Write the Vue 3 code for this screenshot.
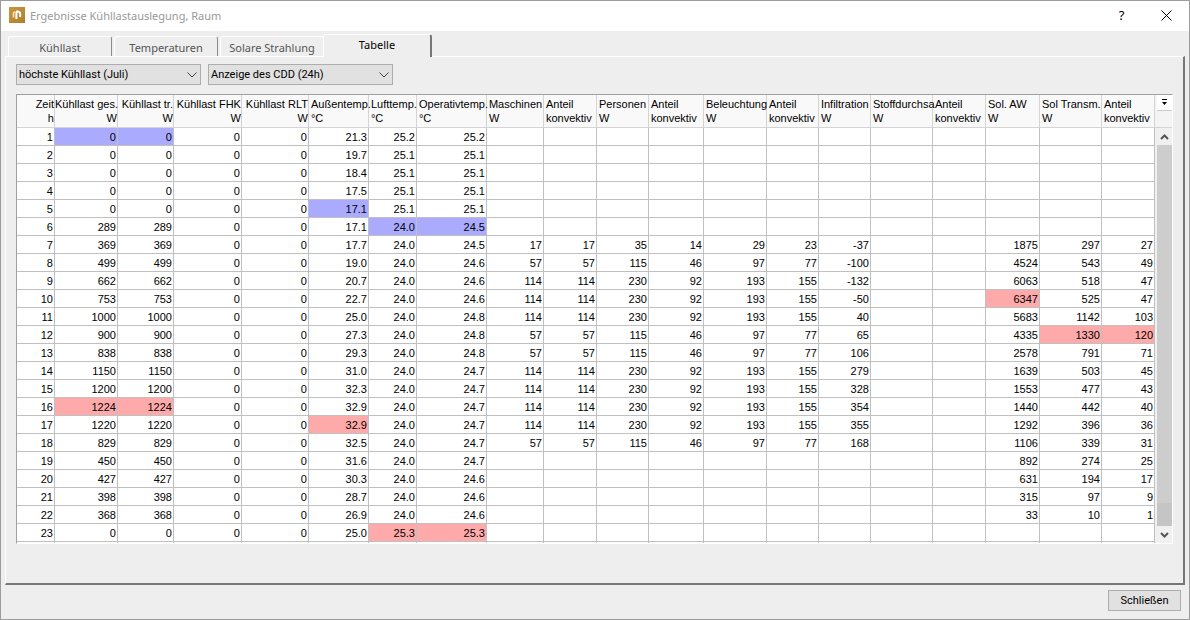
<script setup>
import { ref } from 'vue'

const tabs = ['Kühllast', 'Temperaturen', 'Solare Strahlung', 'Tabelle']
const activeTab = ref('Tabelle')
const period = ref('höchste Kühllast (Juli)')
const display = ref('Anzeige des CDD (24h)')

const columns = [
  { title: 'Zeit', unit: 'h', width: 38, right: true },
  { title: 'Kühllast ges.', unit: 'W', width: 63, right: true },
  { title: 'Kühllast tr.', unit: 'W', width: 56, right: true },
  { title: 'Kühllast FHK', unit: 'W', width: 68, right: true },
  { title: 'Kühllast RLT', unit: 'W', width: 67, right: true },
  { title: 'Außentemp.', unit: '°C', width: 60 },
  { title: 'Lufttemp.', unit: '°C', width: 48 },
  { title: 'Operativtemp.', unit: '°C', width: 70 },
  { title: 'Maschinen', unit: 'W', width: 57 },
  { title: 'Anteil', unit: 'konvektiv', width: 53 },
  { title: 'Personen', unit: 'W', width: 52 },
  { title: 'Anteil', unit: 'konvektiv', width: 55 },
  { title: 'Beleuchtung', unit: 'W', width: 63 },
  { title: 'Anteil', unit: 'konvektiv', width: 52 },
  { title: 'Infiltration', unit: 'W', width: 52 },
  { title: 'Stoffdurchsa', unit: 'W', width: 62 },
  { title: 'Anteil', unit: 'konvektiv', width: 53 },
  { title: 'Sol. AW', unit: 'W', width: 54 },
  { title: 'Sol Transm.', unit: 'W', width: 62 },
  { title: 'Anteil', unit: 'konvektiv', width: 53 },
]
const totalWidth = columns.reduce((sum, c) => sum + c.width, 0)
const share = (c) => ({ width: (c.width / totalWidth) * 100 + '%' })

const full = [114, 114, 230, 92, 193, 155]
const half = [57, 57, 115, 46, 97, 77]
const none = ['', '', '', '', '', '']

// load, temperatures, internal gains, infiltration, solar gains
const hours = [
  [0, '21.3', '25.2', '25.2', none, '', ['', '', '']],
  [0, '19.7', '25.1', '25.1', none, '', ['', '', '']],
  [0, '18.4', '25.1', '25.1', none, '', ['', '', '']],
  [0, '17.5', '25.1', '25.1', none, '', ['', '', '']],
  [0, '17.1', '25.1', '25.1', none, '', ['', '', '']],
  [289, '17.1', '24.0', '24.5', none, '', ['', '', '']],
  [369, '17.7', '24.0', '24.5', [17, 17, 35, 14, 29, 23], -37, [1875, 297, 27]],
  [499, '19.0', '24.0', '24.6', half, -100, [4524, 543, 49]],
  [662, '20.7', '24.0', '24.6', full, -132, [6063, 518, 47]],
  [753, '22.7', '24.0', '24.6', full, -50, [6347, 525, 47]],
  [1000, '25.0', '24.0', '24.8', full, 40, [5683, 1142, 103]],
  [900, '27.3', '24.0', '24.8', half, 65, [4335, 1330, 120]],
  [838, '29.3', '24.0', '24.8', half, 106, [2578, 791, 71]],
  [1150, '31.0', '24.0', '24.7', full, 279, [1639, 503, 45]],
  [1200, '32.3', '24.0', '24.7', full, 328, [1553, 477, 43]],
  [1224, '32.9', '24.0', '24.7', full, 354, [1440, 442, 40]],
  [1220, '32.9', '24.0', '24.7', full, 355, [1292, 396, 36]],
  [829, '32.5', '24.0', '24.7', half, 168, [1106, 339, 31]],
  [450, '31.6', '24.0', '24.7', none, '', [892, 274, 25]],
  [427, '30.3', '24.0', '24.6', none, '', [631, 194, 17]],
  [398, '28.7', '24.0', '24.6', none, '', [315, 97, 9]],
  [368, '26.9', '24.0', '24.6', none, '', [33, 10, 1]],
  [0, '25.0', '25.3', '25.3', none, '', ['', '', '']],
]
const rows = hours.map(([load, outside, air, operative, gains, infiltration, solar], i) => [
  i + 1, load, load, 0, 0, outside, air, operative, ...gains, infiltration, '', '', ...solar,
])

// hour -> marked column indexes
const minima = { 1: [1, 2], 5: [5], 6: [6, 7] }
const maxima = { 10: [17], 12: [18, 19], 16: [1, 2], 17: [5], 23: [6, 7] }
const mark = (hour, col) => ({
  min: minima[hour]?.includes(col),
  max: maxima[hour]?.includes(col),
})
</script>

<template>
  <main class="window">
    <header class="titlebar">
      <svg class="logo" width="16" height="16" viewBox="0 0 16 16" aria-hidden="true">
        <defs>
          <linearGradient id="gold" x1="0" y1="0" x2="1" y2="1">
            <stop offset="0" stop-color="#c9973f" />
            <stop offset="1" stop-color="#b07f2b" />
          </linearGradient>
        </defs>
        <rect width="16" height="16" fill="url(#gold)" />
        <path d="M4.5 10.5V6.4Q4.5 5.2 5.8 4.8" fill="none" stroke="#f3e6cc" stroke-width="1.6" />
        <path d="M7.4 12V5.2Q7.4 4.2 8.8 4.4Q11.2 4.8 11.2 7V10" fill="none" stroke="#fff" stroke-width="2" />
      </svg>
      <h1>Ergebnisse Kühllastauslegung, Raum</h1>
      <button class="caption help" type="button" aria-label="Hilfe">?</button>
      <button class="caption" type="button" aria-label="Fenster schließen">
        <svg width="11" height="11" viewBox="0 0 11 11"><path d="M.5 .5L10.5 10.5M10.5 .5L.5 10.5" stroke="#000" fill="none" /></svg>
      </button>
    </header>

    <nav class="tabs" role="tablist">
      <button
        v-for="tab in tabs" :key="tab" type="button" role="tab" class="tab"
        :class="{ active: tab === activeTab }" :aria-selected="tab === activeTab" @click="activeTab = tab"
      >{{ tab }}</button>
    </nav>

    <section class="panel">
      <div class="filters">
        <div class="combo">
          <select v-model="period" aria-label="Zeitraum"><option>höchste Kühllast (Juli)</option></select>
          <svg width="10" height="6" viewBox="0 0 10 6"><path d="M.5 .5L5 5L9.5 .5" /></svg>
        </div>
        <div class="combo">
          <select v-model="display" aria-label="Anzeige"><option>Anzeige des CDD (24h)</option></select>
          <svg width="10" height="6" viewBox="0 0 10 6"><path d="M.5 .5L5 5L9.5 .5" /></svg>
        </div>
      </div>

      <div class="grid">
        <div class="viewport">
          <table>
            <colgroup><col v-for="(c, i) in columns" :key="i" :style="share(c)" /></colgroup>
            <thead>
              <tr>
                <th v-for="(c, i) in columns" :key="i" scope="col" :class="{ right: c.right }">{{ c.title }}<br />{{ c.unit }}</th>
              </tr>
            </thead>
            <tbody>
              <tr v-for="row in rows" :key="row[0]">
                <td v-for="(value, i) in row" :key="i" :class="mark(row[0], i)">{{ value }}</td>
              </tr>
              <tr><td v-for="(c, i) in columns" :key="i"></td></tr>
            </tbody>
          </table>
        </div>
        <div class="gutter">
          <div class="corner">
            <button type="button" aria-label="Spalten wählen">
              <svg width="7" height="7" viewBox="0 0 7 7"><path d="M1 0H6V1H1ZM1 3H6L3.5 6Z" fill="#000" /></svg>
            </button>
          </div>
          <div class="scrollbar">
            <button type="button" aria-label="Nach oben">
              <svg width="9" height="6" viewBox="0 0 9 6"><path d="M1 5L4.5 1.5L8 5" /></svg>
            </button>
            <div class="thumb"></div>
            <div class="rest"></div>
            <button type="button" aria-label="Nach unten">
              <svg width="9" height="6" viewBox="0 0 9 6"><path d="M1 1L4.5 4.5L8 1" /></svg>
            </button>
          </div>
        </div>
      </div>
    </section>

    <footer class="footer"><button type="button" class="close">Schließen</button></footer>
  </main>
</template>

<style>
body { background: #eee; }
</style>

<style scoped>
.window {
  box-sizing: border-box;
  display: flex;
  flex-direction: column;
  height: 100vh;
  border: 1px solid #9c9c9c;
  background: #eee;
  color: #000;
  font: 11px Roboto, "Liberation Sans", sans-serif;
}
button { padding: 0; border: 0; background: none; color: inherit; font: inherit; }
.titlebar { box-sizing: border-box; display: flex; align-items: center; flex: none; height: 30px; padding-bottom: 2px; background: #fff; }
.logo { margin-left: 8px; }
h1 { flex: 1; margin: 0 0 0 5px; color: #999; font: 11px "Noto Sans", sans-serif; }
.caption { display: grid; place-items: center; width: 45px; height: 28px; }
.help { font: 13px "Noto Sans", sans-serif; }

.tabs { display: flex; align-items: flex-end; gap: 2px; flex: none; height: 25px; padding-left: 7px; }
.tab {
  width: 104px;
  height: 20px;
  padding-top: 2px;
  border: 1px solid #fff;
  border-right-color: #8c8c8c;
  border-bottom: 0;
  border-radius: 3px 3px 0 0;
  color: #555;
  font: 11px "Noto Sans", sans-serif;
}
.tab:nth-child(3) { border-right-color: #fff; }
.tab.active {
  position: relative;
  width: 109px;
  height: 23px;
  margin: 0 0 -1px -3px;
  padding: 0 0 3px;
  border-right: 2px solid #777;
  background: #eee;
  color: #000;
}

.panel {
  display: flex;
  flex: 1;
  flex-direction: column;
  gap: 9px;
  min-height: 0;
  margin: 0 4px;
  padding: 7px 10px 39px;
  border: solid;
  border-width: 1px 2px 2px 1px;
  border-color: #fff #777 #777 #fff;
}
.filters { display: flex; gap: 7px; flex: none; }
.combo { position: relative; width: 185px; }
.combo select {
  display: block;
  appearance: none;
  width: 100%;
  height: 21px;
  padding: 0 20px 0 2px;
  border: 1px solid #adadad;
  border-radius: 0;
  background: #e1e1e1;
  color: #000;
  font: inherit;
}
.combo svg { position: absolute; top: 8px; right: 4px; fill: none; stroke: #444; pointer-events: none; }

.grid {
  display: flex;
  flex: 1;
  min-height: 0;
  border: solid;
  border-width: 1px;
  border-color: #a0a0a0 #fff #fff #a0a0a0;
  background: #fff;
}
.viewport { flex: 1; min-width: 0; overflow: hidden; }
table {
  width: 100%;
  table-layout: fixed;
  border-collapse: separate;
  border-spacing: 0;
  font: 11px "Liberation Sans", Arial, sans-serif;
}
th, td { border: solid #c0c0c0; border-width: 0 1px 1px 0; white-space: nowrap; }
th { padding: 2px 0 2px 2px; border-color: #d4d4d4; background: #f9f9f9; font-weight: normal; line-height: 14px; text-align: left; }
th.right { padding-left: 0; text-align: right; }
td { height: 16px; padding: 1px 1px 0 0; line-height: 16px; text-align: right; }
.min { background: #aaf; }
.max { background: #faa; }

.gutter { display: flex; flex: none; flex-direction: column; width: 17px; }
.corner { box-sizing: border-box; height: 33px; padding-left: 2px; border-bottom: 1px solid #d4d4d4; background: #f4f4f4; }
.corner button { display: grid; place-items: center; width: 15px; height: 16px; border: solid #ccc; border-width: 0 0 1px; background: #fff; }
.scrollbar { display: flex; flex: 1; flex-direction: column; padding-left: 2px; background: #f0f0f0; }
.scrollbar button { display: grid; place-items: center; height: 17px; }
.scrollbar path { fill: none; stroke: #555; stroke-width: 2; }
.thumb { flex: 1; background: #cdcdcd; }
.rest { height: 23px; background: #c5c5c5; }

.footer { display: flex; justify-content: flex-end; flex: none; padding: 5px 8px 8px; }
.close { width: 73px; height: 21px; border: 1px solid #adadad; background: #e1e1e1; }
</style>
